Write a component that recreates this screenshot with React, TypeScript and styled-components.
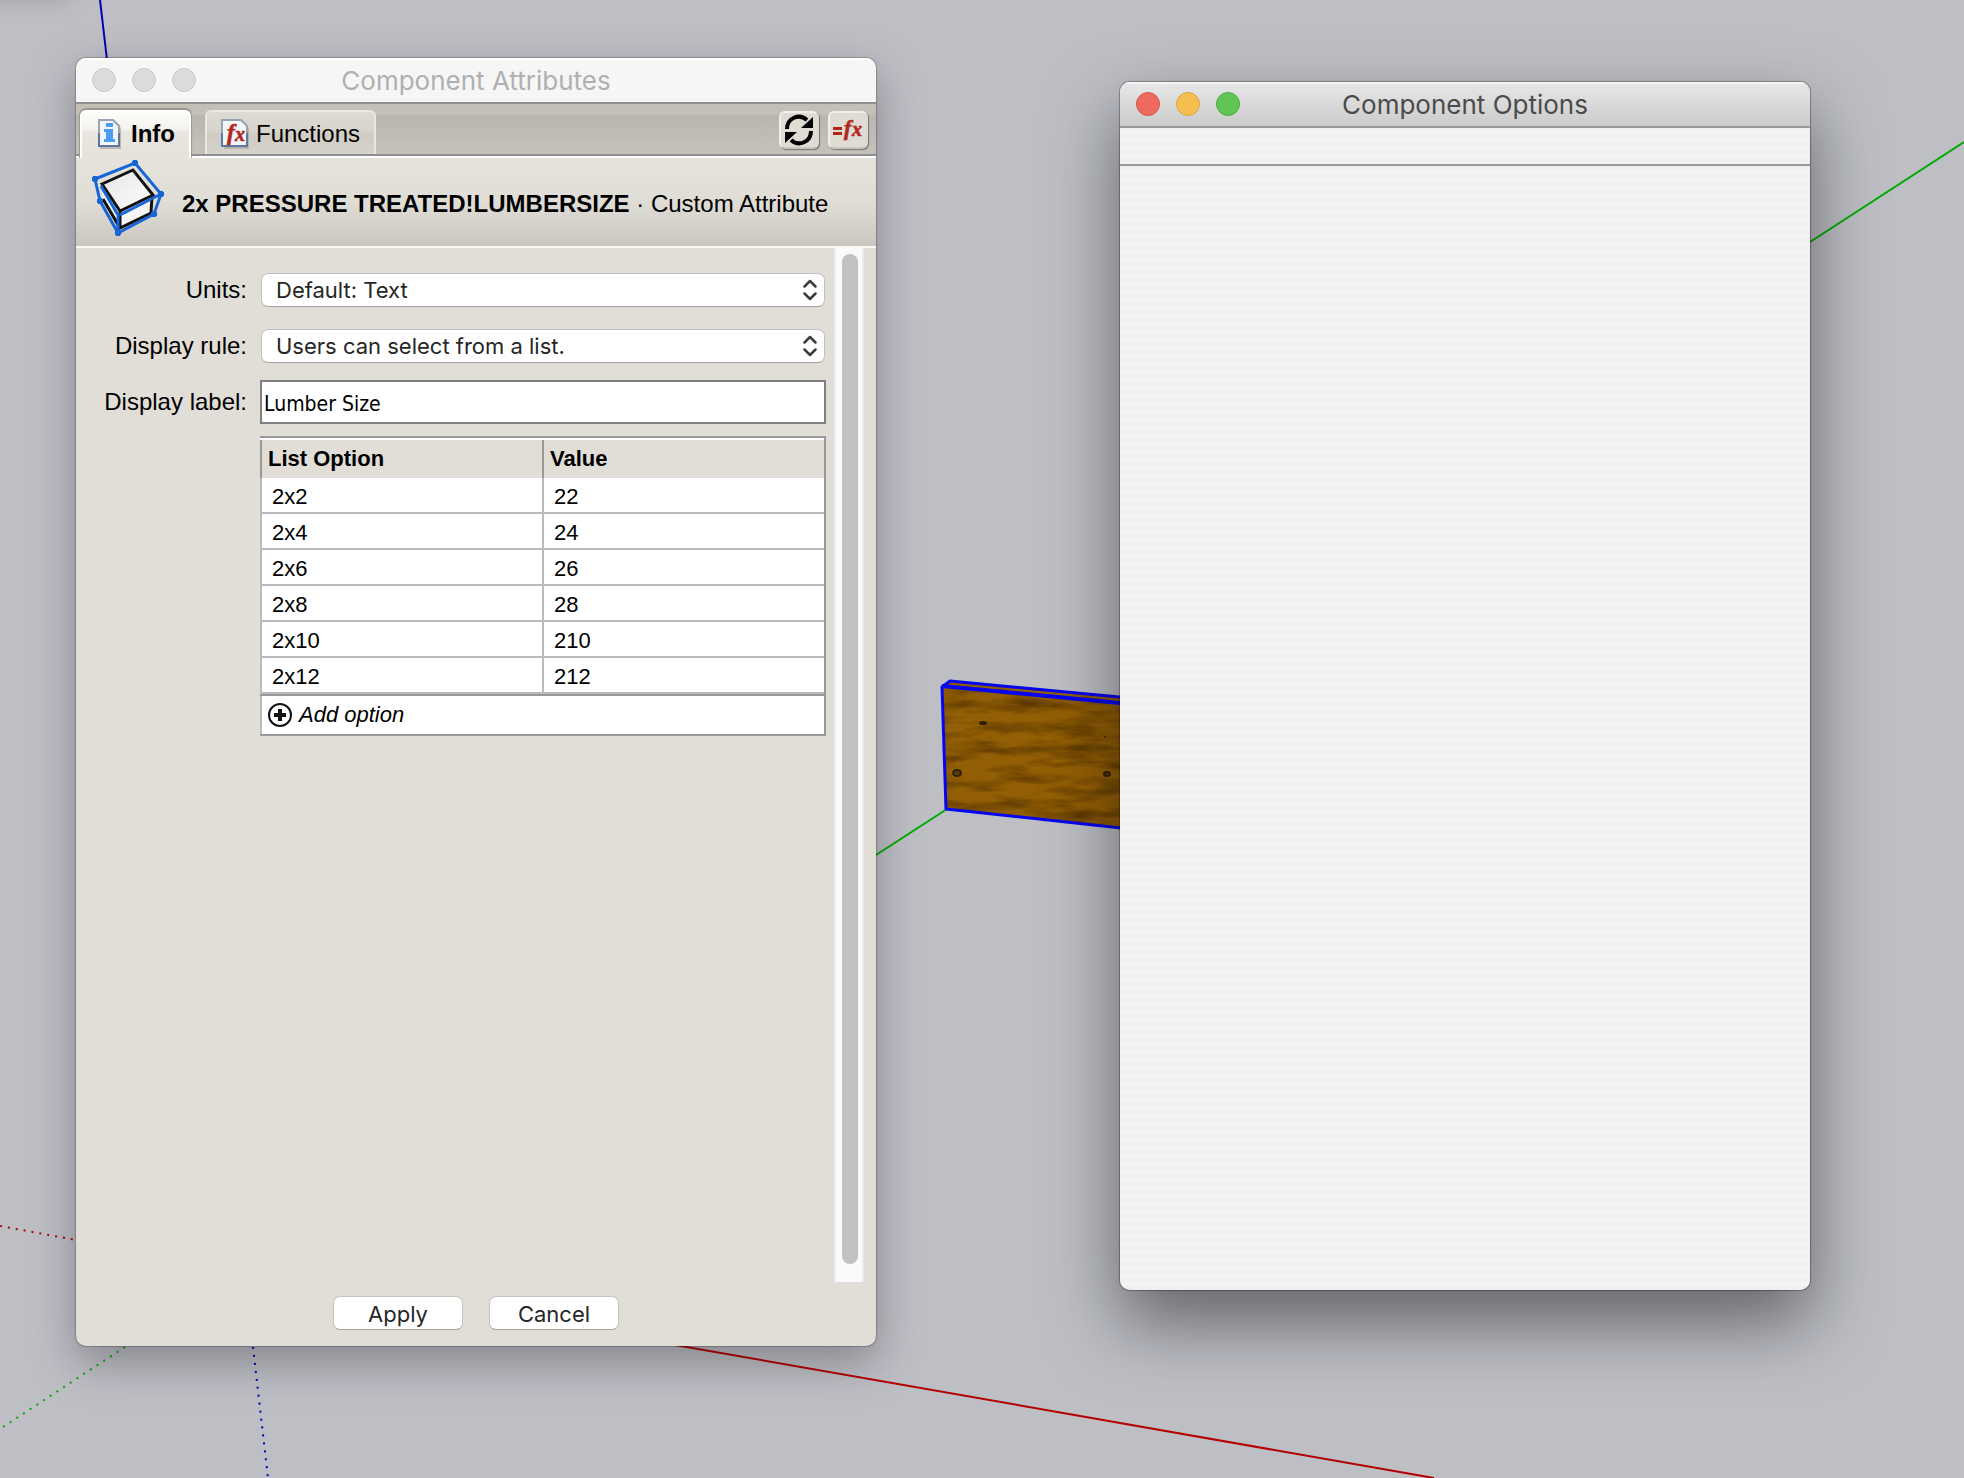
import React, { useState } from "react";
import styled, { createGlobalStyle } from "styled-components";

const arial = `"Liberation Sans", Arial, Helvetica, sans-serif`;
const system = `Inter, "Liberation Sans", sans-serif`;

const GlobalStyle = createGlobalStyle`
  *, *::before, *::after { box-sizing: border-box; }
  body { margin: 0; background: #bdbfc5; }
  button, input, select { font: inherit; color: inherit; margin: 0; }
`;

const Desktop = styled.main`
  position: relative;
  isolation: isolate;
  display: flex;
  gap: 244px;
  min-height: 100vh;
  padding: 58px 154px 132px 76px;
  overflow: hidden;
  font-family: ${arial};
  font-size: 24px;
  color: #000;
`;

const Scene = styled.svg`
  position: absolute;
  inset: 0;
  z-index: -1;
  width: 100%;
  height: 100%;
`;

const Window = styled.section`
  display: flex;
  flex-direction: column;
  min-width: 0;
  border-radius: 10px;
  overflow: hidden;
`;

const AttributesWindow = styled(Window)`
  flex: 800 1 0;
  background: #e1ded7;
  box-shadow: 0 0 1px 1px rgba(0, 0, 0, 0.22), 0 16px 44px rgba(30, 20, 30, 0.34);
`;

const OptionsWindow = styled(Window)`
  flex: 690 1 0;
  margin: 24px 0 56px;
  background: repeating-linear-gradient(#f3f3f3 0 4px, #efefef 4px 8px);
  box-shadow: 0 0 1px 1px rgba(0, 0, 0, 0.3), 0 32px 70px rgba(10, 8, 12, 0.5);
`;

const TitleBar = styled.header<{ $active?: boolean }>`
  display: grid;
  grid-template-columns: 1fr auto 1fr;
  align-items: center;
  flex: none;
  height: 46px;
  padding: 0 16px;
  border-bottom: 2px solid ${(p) => (p.$active ? "#999" : "#8f918f")};
  background: ${(p) => (p.$active ? "linear-gradient(#e8e8e8, #cbcbcb)" : "#f6f6f6")};
  box-shadow: inset 0 2px 0 ${(p) => (p.$active ? "#f4f4f4" : "#fff")};
  color: ${(p) => (p.$active ? "#4b4b4b" : "#b0b0b0")};
`;

const Title = styled.h1`
  margin: 0;
  padding-top: 2px;
  font: 400 26px/32px ${system};
`;

const Lights = styled.div`
  display: flex;
  gap: 16px;
`;

const Light = styled.button<{ $fill: string; $edge: string }>`
  width: 24px;
  height: 24px;
  padding: 0;
  border: 1px solid ${(p) => p.$edge};
  border-radius: 50%;
  background: ${(p) => p.$fill};
`;

const TabBar = styled.div`
  display: flex;
  align-items: flex-end;
  flex: none;
  height: 54px;
  padding: 0 8px 0 4px;
  background: linear-gradient(#c3bfb6 0, #c5c1b8 10px, #b9b6af 12px, #c6c1bb 50px, #8f8f8f 50px, #8f8f8f 52px, #fff 52px);
`;

const TabList = styled.div`
  display: flex;
  align-items: flex-end;
  gap: 14px;
  flex: 1;
`;

const Tab = styled.button<{ $selected?: boolean }>`
  display: flex;
  align-items: center;
  gap: 7px;
  height: ${(p) => (p.$selected ? "48px" : "44px")};
  margin-bottom: ${(p) => (p.$selected ? "0" : "4px")};
  padding: ${(p) => (p.$selected ? "0 14px 2px" : "2px 14px 0")};
  border: 2px solid ${(p) => (p.$selected ? "#fff" : "#e9e7e2")};
  border-bottom: 0;
  border-radius: 6px 6px 0 0;
  background: ${(p) =>
    p.$selected
      ? "linear-gradient(#fdfdfb, #f3f1ec 18px, #e9e5df 20px, #e5e2db)"
      : "linear-gradient(#dddbd4, #d6d3cb 20px, #d0ccc4 22px, #d6d3cb)"};
  box-shadow: ${(p) => (p.$selected ? "0 -1px 1px 1px #99968f" : "none")};
  clip-path: inset(-3px -3px 0 -3px);
  font-weight: ${(p) => (p.$selected ? 700 : 400)};
  line-height: 32px;
`;

const Tools = styled.div`
  display: flex;
  align-items: center;
  gap: 9px;
  height: 54px;
  padding-bottom: 2px;
`;

const ToolButton = styled.button`
  display: grid;
  place-items: center;
  width: 40px;
  height: 38px;
  padding: 0;
  border: 2px solid;
  border-color: #f1efe9 #dedad2 #c9c6be #f1efe9;
  border-radius: 6px;
  background: #dfdcd4;
  box-shadow: 1px 1px 1px #77746f;
`;

const Summary = styled.div`
  display: flex;
  align-items: center;
  gap: 16px;
  flex: none;
  height: 90px;
  padding: 0 14px;
  border-bottom: 2px solid #fbfaf8;
  background: linear-gradient(#e6e3dc, #e0ddd6 50%, #c9c6bf);
  line-height: 32px;
  white-space: nowrap;
`;

const SummaryText = styled.p`
  margin: 4px 0 0;
`;

const Body = styled.div`
  display: flex;
  flex: 1;
  gap: 8px;
  padding-right: 12px;
`;

const Form = styled.form`
  display: grid;
  grid-template-columns: 171px 1fr;
  grid-template-rows: 56px 56px 56px auto;
  align-content: start;
  align-items: center;
  column-gap: 13px;
  flex: 1;
  padding-top: 14px;
`;

const Label = styled.label`
  line-height: 32px;
  text-align: right;
  white-space: nowrap;
`;

const SelectBox = styled.div`
  display: grid;
  align-items: center;
  margin: 0 1px;
  > * { grid-area: 1 / 1; }
  > svg { justify-self: end; margin-right: 8px; pointer-events: none; }
`;

const Select = styled.select`
  appearance: none;
  width: 100%;
  height: 34px;
  padding: 0 32px 0 14px;
  border: 1px solid #c4bfbd;
  border-bottom-color: #a5a3a0;
  border-radius: 7px;
  background: #fff;
  color: #262626;
  font: 400 22px/30px ${system};
`;

const FieldInput = styled.input`
  width: 100%;
  height: 44px;
  padding: 4px 2px 0;
  border: 2px solid #808080;
  border-radius: 0;
  background: #fff;
  font: 400 21px/32px "DejaVu Sans Condensed", "Noto Sans", sans-serif;
`;

const OptionArea = styled.div`
  grid-column: 2;
  margin-top: 6px;
  border: 2px solid #999;
  border-left: 0;
  background: #fff;
  font-size: 22px;
`;

const OptionTable = styled.table`
  width: 100%;
  border-collapse: separate;
  border-spacing: 0;
  table-layout: fixed;
  border-top: 2px solid #fff;
  border-bottom: 2px solid #999;
`;

const HeadCell = styled.th`
  height: 38px;
  padding: 0 6px;
  border-left: 2px solid #999;
  background: #e1ded7;
  line-height: 30px;
  text-align: left;
`;

const Cell = styled.td`
  height: 36px;
  padding: 4px 10px 0;
  border-left: 2px solid #bbb;
  border-bottom: 2px solid #bbb;
  line-height: 30px;
`;

const AddButton = styled.button`
  display: flex;
  align-items: center;
  gap: 6px;
  width: 100%;
  height: 38px;
  padding: 0 6px;
  border: 0;
  border-left: 2px solid #bbb;
  background: #fff;
  font-style: italic;
  line-height: 30px;
`;

const ScrollTrack = styled.div`
  flex: none;
  display: flex;
  width: 30px;
  padding: 6px 4px 18px 6px;
  border: solid #ececec;
  border-width: 0 2px;
  background: #fafafa;
`;

const ScrollThumb = styled.div`
  flex: 1;
  border-radius: 8px;
  background: #c1c1c1;
`;

const Footer = styled.footer`
  display: flex;
  justify-content: center;
  gap: 26px;
  flex: none;
  padding: 14px 0 16px;
`;

const PushButton = styled.button`
  width: 130px;
  height: 34px;
  padding: 2px 0 0;
  border: 1px solid #c6c3be;
  border-bottom-color: #a5a3a0;
  border-radius: 7px;
  background: #fff;
  color: #262626;
  font: 400 22px/30px ${system};
`;

const OptionsToolbar = styled.div`
  flex: none;
  height: 38px;
  border-bottom: 2px solid #999b99;
`;

const Glyph = styled.text`
  font-family: "Liberation Serif", serif;
  font-style: italic;
  font-weight: 700;
`;

const InfoIcon = () => (
  <svg width="28" height="30" viewBox="0 0 28 30" aria-hidden="true">
    <path d="M4 3h16l5 6v21H4z" fill="#aaa69f" opacity=".7" />
    <path d="M3 1h14l6 6v20H3z" fill="#f3f5f8" stroke="#9aa3b0" strokeWidth="2" />
    <path d="M3 14v13h20V14" fill="none" stroke="#5b78a5" strokeWidth="2" />
    <path d="M10 4h7v4h-7zM8 10h9v10h2v3H8v-3h2v-7H8z" fill="#4a9ff5" />
  </svg>
);

const FunctionIcon = () => (
  <svg width="28" height="30" viewBox="0 0 28 30" aria-hidden="true">
    <path d="M3 3h20l5 6v21H3z" fill="#aaa69f" opacity=".7" />
    <path d="M1 1h19l6 6v20H1z" fill="#f3f5f8" stroke="#9aa3b0" strokeWidth="2" />
    <path d="M1 14v13h25V14" fill="none" stroke="#5b78a5" strokeWidth="2" />
    <Glyph x="6" y="21" fontSize="23" fill="#b3261e" stroke="#b3261e" strokeWidth=".6">f</Glyph>
    <Glyph x="14" y="22" fontSize="20" fill="#b3261e" stroke="#b3261e" strokeWidth=".6">x</Glyph>
  </svg>
);

const RefreshIcon = () => (
  <svg width="30" height="32" viewBox="0 0 30 32" aria-hidden="true">
    <g fill="none" stroke="#000" strokeWidth="4">
      <path d="M3 15C3 4 15-1 23 6" />
      <path d="M27 17C27 28 15 33 7 26" />
    </g>
    <path d="M29 3v11H17zM1 29V18h12z" fill="#000" />
  </svg>
);

const FormulaIcon = () => (
  <svg width="32" height="30" viewBox="0 0 32 30" aria-hidden="true">
    <path d="M1 12h9v3H1zM1 17h9v3H1z" fill="#b3261e" />
    <Glyph x="12" y="20" fontSize="22" fill="#b3261e" stroke="#b3261e" strokeWidth=".6">f</Glyph>
    <Glyph x="20" y="21" fontSize="20" fill="#b3261e" stroke="#b3261e" strokeWidth=".6">x</Glyph>
  </svg>
);

const ComponentIcon = () => (
  <svg width="76" height="84" viewBox="0 -4 76 84" aria-hidden="true">
    <defs>
      <linearGradient id="face" x1="0" y1="0" x2="1" y2="1">
        <stop offset="0" stopColor="#e4e4e6" />
        <stop offset="1" stopColor="#fff" />
      </linearGradient>
    </defs>
    <g transform="translate(0 -1)">
      <path d="M12 21 43 7 63 32 61 50 30 65 13 36z" fill="#f6f6f6" />
      <path d="M12 21 43 7 63 32 30 48z" fill="url(#face)" stroke="#111" strokeWidth="3" />
      <path d="M13 36 30 65 61 50 62 33M30 49V65" fill="none" stroke="#111" strokeWidth="3" />
      <path d="M5 16 45 0 71 31 64 51 28 70 10 38zM30 52 69 32M28 51V70M11 23 28 52" fill="none" stroke="#1766d8" strokeWidth="3" />
      <path d="M2 16h6M5 13v6M42 0h6M45-3v6M68 31h6M71 28v6M61 51h6M64 48v6M25 70h6M28 67v6M7 38h6M10 35v6" stroke="#1766d8" strokeWidth="4" />
    </g>
  </svg>
);

const Chevrons = () => (
  <svg width="14" height="22" viewBox="0 0 14 22" fill="none" stroke="#3c3c3c" strokeWidth="2.500" strokeLinecap="round" strokeLinejoin="round" aria-hidden="true">
    <path d="M1.500 7.500 7 2l5.500 5.500M1.500 14.500 7 20l5.500-5.500" />
  </svg>
);

const PlusIcon = () => (
  <svg width="25" height="26" viewBox="0 0 25 26" fill="none" stroke="#111" aria-hidden="true">
    <circle cx="12" cy="13" r="11" strokeWidth="2" />
    <path d="M12 7v12M6 13h12" strokeWidth="4" />
  </svg>
);

const Viewport = () => (
  <Scene viewBox="0 0 1964 1478" preserveAspectRatio="xMinYMin slice" aria-hidden="true">
    <defs>
      <filter id="grain" x="0" y="0" width="1" height="1" colorInterpolationFilters="sRGB">
        <feTurbulence type="fractalNoise" baseFrequency="0.02 0.09" numOctaves="4" seed="7" />
        <feColorMatrix values="0 0 0 0 0.3  0 0 0 0 0.18  0 0 0 0 0  1.600 0 0 0 -0.640" />
        <feComposite in2="SourceGraphic" operator="in" />
      </filter>
      <filter id="soft" x="-1" y="-2" width="3" height="5">
        <feGaussianBlur stdDeviation="14" />
      </filter>
    </defs>
    <rect x="-40" y="-40" width="110" height="34" fill="#000" opacity=".25" filter="url(#soft)" />
    <g fill="none" strokeWidth="2">
      <path d="M100 0 107 60" stroke="#0000b4" />
      <path d="M876 855 947 809M1810 242 1964 142" stroke="#00aa00" />
      <path d="M675 1345 1434 1478" stroke="#b40000" />
      <g strokeDasharray="2 6">
        <path d="M0 1226 76 1240" stroke="#b40000" />
        <path d="M3 1427 128 1345" stroke="#00aa00" />
        <path d="M253 1347 268 1478" stroke="#0000b4" />
      </g>
    </g>
    <path d="M942 687 950 681 1130 698V829L946 809z" fill="#935f04" />
    <path d="M942 687 950 681 1130 698V829L946 809z" fill="#935f04" filter="url(#grain)" />
    <g fill="#5a3c08" stroke="#2e2008" strokeWidth="2">
      <ellipse cx="983" cy="723" rx="3" ry="1" />
      <ellipse cx="957" cy="773" rx="4" ry="3" />
      <ellipse cx="1107" cy="774" rx="3" ry="2" />
      <circle cx="1105" cy="737" r=".5" strokeWidth="1" />
    </g>
    <g fill="none" stroke="#0505f0" strokeWidth="3" strokeLinejoin="round">
      <path d="M1130 829 946 809 942 687 950 681 1130 698" />
      <path d="M942 686 1130 704" strokeWidth="4" />
    </g>
  </Scene>
);

const options = [
  ["2x2", "22"],
  ["2x4", "24"],
  ["2x6", "26"],
  ["2x8", "28"],
  ["2x10", "210"],
  ["2x12", "212"],
];

const idle = { fill: "#dcdcdc", edge: "#c8c8c8" };
const lightNames = ["Close", "Minimize", "Zoom"];
const activeLights = [
  { fill: "#ee6a5f", edge: "#d5544a" },
  { fill: "#f5bf4f", edge: "#d9a13c" },
  { fill: "#61c554", edge: "#4daa3f" },
];

const WindowLights = ({ active }: { active?: boolean }) => (
  <Lights>
    {lightNames.map((name, i) => {
      const tone = active ? activeLights[i] : idle;
      return <Light key={name} type="button" aria-label={name} $fill={tone.fill} $edge={tone.edge} />;
    })}
  </Lights>
);

export default function App() {
  const [label, setLabel] = useState("Lumber Size");
  return (
    <>
      <GlobalStyle />
      <Desktop>
        <Viewport />
        <AttributesWindow>
          <TitleBar>
            <WindowLights />
            <Title>Component Attributes</Title>
          </TitleBar>
          <TabBar>
            <TabList role="tablist">
              <Tab type="button" role="tab" aria-selected="true" $selected>
                <InfoIcon />
                Info
              </Tab>
              <Tab type="button" role="tab" aria-selected="false">
                <FunctionIcon />
                Functions
              </Tab>
            </TabList>
            <Tools>
              <ToolButton type="button" aria-label="Refresh"><RefreshIcon /></ToolButton>
              <ToolButton type="button" aria-label="Toggle formula view"><FormulaIcon /></ToolButton>
            </Tools>
          </TabBar>
          <Summary>
            <ComponentIcon />
            <SummaryText><b>2x PRESSURE TREATED!LUMBERSIZE</b> · Custom Attribute</SummaryText>
          </Summary>
          <Body>
            <Form id="attribute" onSubmit={(e) => e.preventDefault()}>
              <Label htmlFor="units">Units:</Label>
              <SelectBox>
                <Select id="units"><option>Default: Text</option></Select>
                <Chevrons />
              </SelectBox>
              <Label htmlFor="rule">Display rule:</Label>
              <SelectBox>
                <Select id="rule"><option>Users can select from a list.</option></Select>
                <Chevrons />
              </SelectBox>
              <Label htmlFor="label">Display label:</Label>
              <FieldInput id="label" value={label} onChange={(e) => setLabel(e.target.value)} />
              <OptionArea>
                <OptionTable>
                  <thead>
                    <tr><HeadCell>List Option</HeadCell><HeadCell>Value</HeadCell></tr>
                  </thead>
                  <tbody>
                    {options.map(([name, value]) => (
                      <tr key={name}><Cell>{name}</Cell><Cell>{value}</Cell></tr>
                    ))}
                  </tbody>
                </OptionTable>
                <AddButton type="button"><PlusIcon />Add option</AddButton>
              </OptionArea>
            </Form>
            <ScrollTrack><ScrollThumb /></ScrollTrack>
          </Body>
          <Footer>
            <PushButton type="submit" form="attribute">Apply</PushButton>
            <PushButton type="button">Cancel</PushButton>
          </Footer>
        </AttributesWindow>
        <OptionsWindow>
          <TitleBar $active>
            <WindowLights active />
            <Title>Component Options</Title>
          </TitleBar>
          <OptionsToolbar />
        </OptionsWindow>
      </Desktop>
    </>
  );
}
